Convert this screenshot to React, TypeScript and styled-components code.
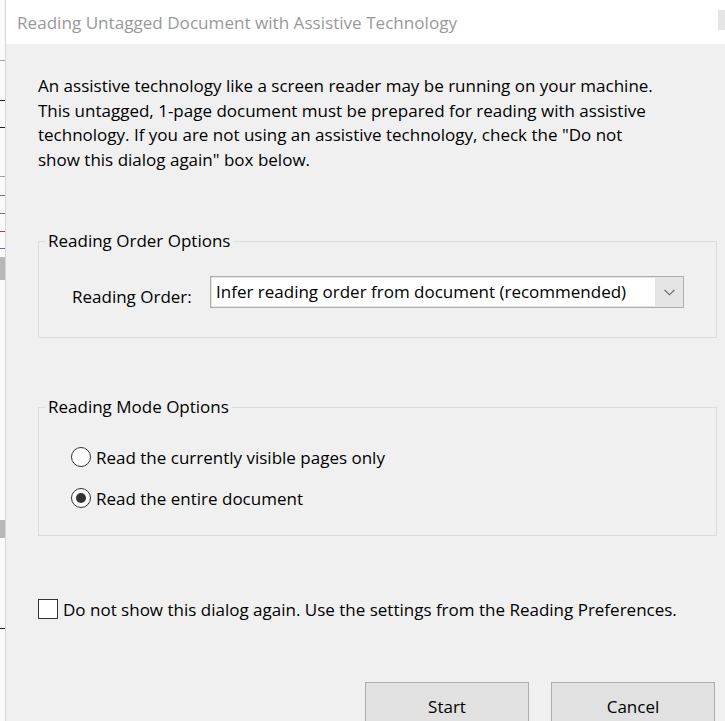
import React from 'react';
import styled, { createGlobalStyle } from 'styled-components';

const GlobalStyle = createGlobalStyle`
  html, body {
    margin: 0;
    padding: 0;
    background: #ffffff;
    overflow: hidden;
  }
  body {
    font-family: "Open Sans", "Noto Sans", sans-serif;
    color: #000000;
  }
`;

const Screen = styled.div`
  display: flex;
  width: 725px;
  height: 721px;
  overflow: hidden;
`;

const BehindStrip = styled.div`
  width: 5px;
  flex-shrink: 0;
  background: #fbfbfb;
  display: flex;
  flex-direction: column;
`;

const StripMark = styled.div<{ top: number; h?: number; color?: string }>`
  margin-top: ${({ top }) => top}px;
  height: ${({ h }) => h ?? 1}px;
  flex-shrink: 0;
  background: ${({ color }) => color ?? '#a0a0a0'};
`;

const Dialog = styled.div`
  flex: 1;
  display: flex;
  flex-direction: column;
  background: #f0f0f0;
  border-left: 1px solid #d6d6d6;
  overflow: hidden;
`;

const TitleBar = styled.div`
  flex-shrink: 0;
  height: 44px;
  background: #ffffff;
  display: flex;
  align-items: center;
  justify-content: space-between;
  padding-left: 11px;
`;

const Title = styled.div`
  font-size: 17.1px;
  color: #999999;
`;

const CloseStub = styled.div`
  width: 7px;
  height: 20px;
  margin-top: -4px;
  background: #e5e5e5;
`;

const Body = styled.div`
  flex-shrink: 0;
  display: flex;
  flex-direction: column;
  padding: 0 8px 0 32px;
`;

const Intro = styled.p`
  margin: 30px 0 0;
  font-size: 17px;
  line-height: 24.6px;
`;

const GroupBox = styled.fieldset<{ top: number; h: number }>`
  margin: ${({ top }) => top}px 0 0;
  height: ${({ h }) => h}px;
  box-sizing: border-box;
  border: 1px solid #dcdcdc;
  padding: 0;
  min-width: 0;
`;

const Legend = styled.legend`
  margin-left: 6px;
  padding: 0 3px 0 3px;
  font-size: 17px;
  line-height: 20px;
`;

const OrderRow = styled.div`
  display: flex;
  align-items: center;
  padding: 25px 32px 0 33px;
`;

const FieldLabel = styled.label`
  width: 138px;
  font-size: 17px;
  padding-top: 8px;
`;

const Combo = styled.div`
  flex: 1;
  height: 32px;
  box-sizing: border-box;
  border: 1px solid #adadad;
  background: #e5e5e5;
  display: flex;
  padding: 1px 0 1px 1px;
`;

const ComboValue = styled.div`
  flex: 1;
  background: #ffffff;
  font-size: 17px;
  line-height: 28px;
  padding-left: 4px;
`;

const ComboArrow = styled.div`
  width: 28px;
  display: flex;
  align-items: center;
  justify-content: center;
`;

const RadioList = styled.div`
  display: flex;
  flex-direction: column;
  gap: 21px;
  padding: 30px 0 0 32px;
`;

const OptionRow = styled.label`
  display: flex;
  align-items: center;
  gap: 5px;
  font-size: 17px;
  height: 20px;
`;

const RadioCircle = styled.span<{ checked?: boolean }>`
  width: 20px;
  height: 20px;
  box-sizing: border-box;
  border-radius: 50%;
  border: 1px solid #333333;
  background: #ffffff;
  display: flex;
  align-items: center;
  justify-content: center;

  &::after {
    content: '';
    display: ${({ checked }) => (checked ? 'block' : 'none')};
    width: 10px;
    height: 10px;
    border-radius: 50%;
    background: #333333;
  }
`;

const CheckRow = styled.label`
  display: flex;
  align-items: center;
  gap: 5px;
  margin-top: 63px;
  font-size: 17px;
  height: 20px;
`;

const CheckBox = styled.span`
  width: 20px;
  height: 20px;
  box-sizing: border-box;
  border: 1px solid #333333;
  background: #ffffff;
`;

const ButtonRow = styled.div`
  display: flex;
  justify-content: flex-end;
  gap: 22px;
  margin-top: 63px;
  padding-right: 2px;
`;

const DialogButton = styled.button`
  width: 164px;
  height: 44px;
  box-sizing: border-box;
  border: 1px solid #adadad;
  background: #e1e1e1;
  font-family: inherit;
  font-size: 17px;
  color: #000000;
  padding: 4px 0 0;
  display: flex;
  align-items: center;
  justify-content: center;
  line-height: 1;
`;

const Chevron = () => (
  <svg width="11" height="7" viewBox="0 0 11 7">
    <path d="M0.5 0.8 L5.5 5.8 L10.5 0.8" fill="none" stroke="#606060" strokeWidth="1.1" />
  </svg>
);

const App: React.FC = () => {
  return (
    <>
      <GlobalStyle />
      <Screen>
        <BehindStrip>
          <StripMark top={60} />
          <StripMark top={39} h={1} color="#222" />
          <StripMark top={26} h={1} color="#222" />
          <StripMark top={48} />
          <StripMark top={18} h={1} color="#5b6fb0" />
          <StripMark top={17} h={1} color="#5b6fb0" />
          <StripMark top={17} h={1} color="#a04040" />
          <StripMark top={16} h={1} color="#5b6fb0" />
          <StripMark top={8} h={23} color="#b8b8b8" />
          <StripMark top={240} h={18} color="#b8b8b8" />
          <StripMark top={90} h={1} color="#222" />
        </BehindStrip>
        <Dialog>
          <TitleBar>
            <Title>Reading Untagged Document with Assistive Technology</Title>
            <CloseStub />
          </TitleBar>
          <Body>
            <Intro>
              An assistive technology like a screen reader may be running on your machine.
              <br />
              This untagged, 1-page document must be prepared for reading with assistive
              <br />
              technology. If you are not using an assistive technology, check the "Do not
              <br />
              show this dialog again" box below.
            </Intro>

            <GroupBox top={59} h={107}>
              <Legend>Reading Order Options</Legend>
              <OrderRow>
                <FieldLabel>Reading Order:</FieldLabel>
                <Combo>
                  <ComboValue>Infer reading order from document (recommended)</ComboValue>
                  <ComboArrow>
                    <Chevron />
                  </ComboArrow>
                </Combo>
              </OrderRow>
            </GroupBox>

            <GroupBox top={59} h={139}>
              <Legend>Reading Mode Options</Legend>
              <RadioList>
                <OptionRow>
                  <RadioCircle />
                  Read the currently visible pages only
                </OptionRow>
                <OptionRow>
                  <RadioCircle checked />
                  Read the entire document
                </OptionRow>
              </RadioList>
            </GroupBox>

            <CheckRow>
              <CheckBox />
              Do not show this dialog again. Use the settings from the Reading Preferences.
            </CheckRow>

            <ButtonRow>
              <DialogButton>Start</DialogButton>
              <DialogButton>Cancel</DialogButton>
            </ButtonRow>
          </Body>
        </Dialog>
      </Screen>
    </>
  );
};

export default App;
